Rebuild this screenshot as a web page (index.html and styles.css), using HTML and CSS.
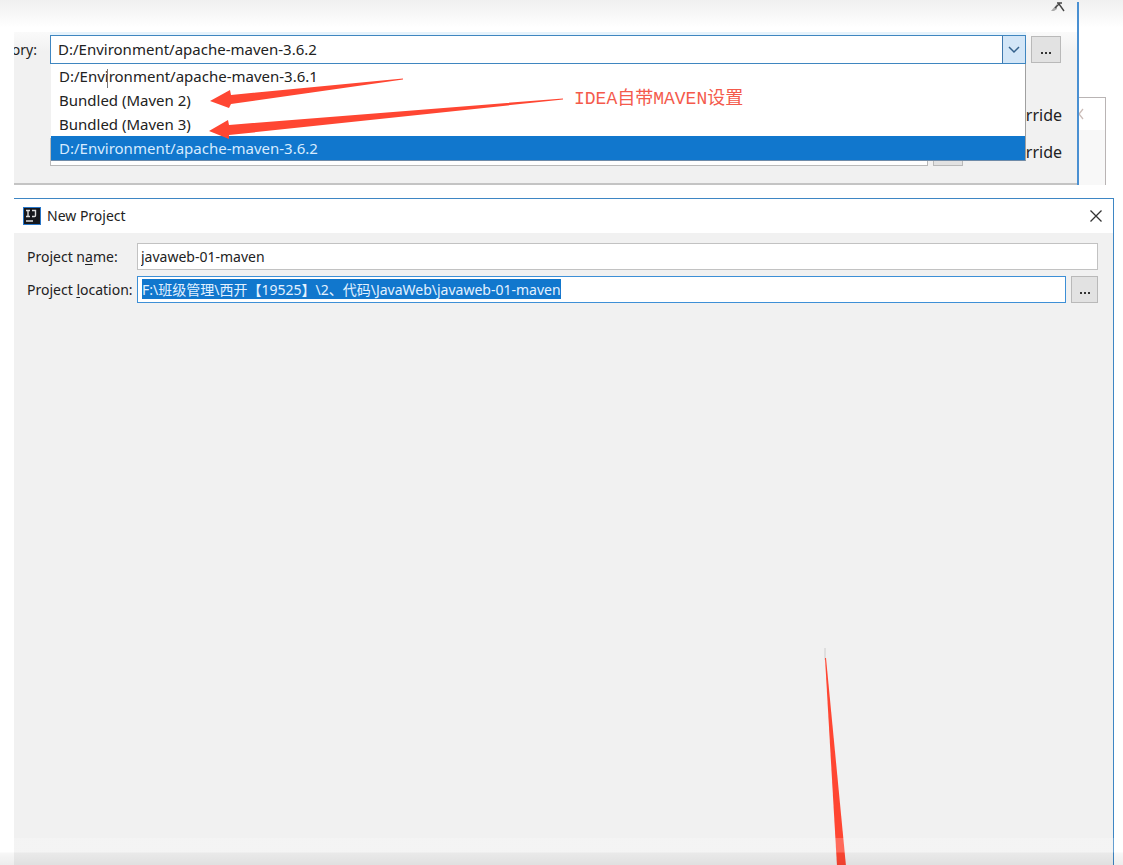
FILE: index.html
```
<!DOCTYPE html>
<html lang="zh-CN">
<head>
<meta charset="utf-8">
<meta name="viewport" content="width=device-width, initial-scale=1">
<title>New Project</title>
<link rel="stylesheet" href="styles.css">
</head>
<body>
<div class="page">
  <section class="top">
    <div class="settings">
      <div class="settings-bar">
        <svg class="bar-close" width="14" height="10" viewBox="0 0 14 10" aria-hidden="true">
          <path d="M0 9 6 2V7L3 9Z" fill="#aaa"/><path d="M4 6 8 2M6 1H11M8 2 13 9" fill="none" stroke="#444" stroke-width="1.4"/>
        </svg>
      </div>
      <div class="settings-body">
        <div class="row home-row">
          <label class="cut-label" for="home">ory:</label>
          <div class="combo">
            <input class="combo-input" id="home" type="text" value="D:/Environment/apache-maven-3.6.2">
            <button class="combo-arrow" type="button" aria-label="Show list">
              <svg width="12" height="8" viewBox="0 0 12 8"><path d="M1 1 6 6 11 1" fill="none" stroke="#35618c" stroke-width="1.5"/></svg>
            </button>
            <div class="list" role="listbox" aria-label="Maven home">
              <button class="option" type="button" role="option">D:/Environment/apache-maven-3.6.1</button>
              <button class="option" type="button" role="option">Bundled (Maven 2)</button>
              <button class="option" type="button" role="option">Bundled (Maven 3)</button>
              <button class="option chosen" type="button" role="option" aria-selected="true">D:/Environment/apache-maven-3.6.2</button>
            </div>
          </div>
          <button class="browse big" type="button" aria-label="Browse home"><span class="dots"></span></button>
        </div>
        <div class="row override-row"><span class="override">rride</span></div>
        <div class="row override-row">
          <input class="repo" type="text" aria-label="Local repository">
          <button class="browse big" type="button" aria-label="Browse repository"></button>
          <span class="override">rride</span>
        </div>
      </div>
      <svg class="arrows" width="600" height="150" viewBox="0 0 600 150" aria-hidden="true">
        <path d="M107.500 69V88" stroke="#777"/>
        <path d="M210 101 230 90 231 95 403 78.500V79.500L231 104 229 108Z" fill="#ff4632"/>
        <path d="M209 131 228 120 229 125 563 98.500V99.500L229 135V139Z" fill="#ff4632"/>
      </svg>
      <p class="note">IDEA自带MAVEN设置</p>
    </div>
    <div class="ghost">
      <div class="ghost-bar"><svg width="5" height="12" viewBox="0 0 5 12" aria-hidden="true"><path d="M4 1 0 6 4 11" fill="none" stroke="#cbbcb8" stroke-width="1.3"/></svg></div>
    </div>
  </section>

  <main class="project">
    <header class="title-bar">
      <svg width="18" height="18" viewBox="0 0 18 18" aria-hidden="true">
        <rect width="18" height="18" fill="#2876c8"/><rect x="1" y="1" width="16" height="16" fill="#15171c"/>
        <path d="M3 3.500H7M5 3.500V9.500M3 9.500H7M9 3.500H12.500V8.500Q12.500 9.500 11.500 9.500H9" fill="none" stroke="#ddd" stroke-width="1.400"/>
        <path d="M3 14H10" stroke="#ddd" stroke-width="1.500"/>
      </svg>
      <h1 class="title">New Project</h1>
      <button class="close" type="button" aria-label="Close">
        <svg width="14" height="14" viewBox="0 0 14 14"><path d="M1.500 1.500 12.500 12.500M12.500 1.500 1.500 12.500" fill="none" stroke="#333" stroke-width="1.300"/></svg>
      </button>
    </header>
    <form class="form">
      <div class="form-row">
        <label class="form-label" for="name">Project n<u>a</u>me:</label>
        <input class="field" id="name" type="text" value="javaweb-01-maven">
      </div>
      <div class="form-row">
        <label class="form-label" for="location">Project <u>l</u>ocation:</label>
        <input class="field active" id="location" type="text" value="F:\班级管理\西开【19525】\2、代码\JavaWeb\javaweb-01-maven">
        <button class="browse" type="button" aria-label="Browse location"><span class="dots"></span></button>
      </div>
    </form>
    <svg class="pointer" width="30" height="220" viewBox="0 0 30 220" aria-hidden="true">
      <path d="M5 2V14" stroke="#ccc"/>
      <path d="M5 12 6 12 26 220H17Z" fill="#ff4632"/>
    </svg>
  </main>
  <div class="shade"></div>
</div>
<script src="main.js"></script>
</body>
</html>
```
FILE: styles.css
```
* { box-sizing: border-box; }
body {
  margin: 0;
  background: #fff;
  color: #222;
  font: 14px/20px "Noto Sans", "Noto Sans CJK SC", sans-serif;
}
input, button { font: inherit; color: inherit; margin: 0; border-radius: 0; outline: 0; }
.page {
  position: relative;
  display: flex;
  flex-direction: column;
  height: 100vh;
  overflow: hidden;
  background: linear-gradient(#f0f0f0, #fff 28px);
}

/* settings panel with the open drop-down */
.top { display: flex; align-items: flex-end; margin: 0 17px 0 14px; padding-top: 2px; }
.settings { position: relative; flex: 1; border-right: 2px solid #4a90d2; }
.settings-bar { height: 30px; padding-right: 12px; text-align: right; line-height: 0; }
.settings-body {
  padding: 3px 15px 17px 0;
  border-bottom: 2px solid #c4c4c4;
  background: linear-gradient(#fafafa, #f1f1f1 20px);
}
.row { display: flex; align-items: center; gap: 5px; }
.home-row { margin-bottom: 37px; }
.cut-label {
  display: flex;
  justify-content: flex-end;
  width: 23px;
  margin-right: 8px;
  overflow: hidden;
}
.combo {
  position: relative;
  display: flex;
  flex: 1;
  height: 29px;
  border: 1px solid #3f86c0;
  background: #fff;
  box-shadow: 0 -3px 0 #e6f3fc;
}
.combo-input { flex: 1; min-width: 0; padding: 0 7px 2px; border: 0; background: none; font-size: 15px; }
.combo-arrow {
  display: grid;
  place-items: center;
  width: 23px;
  padding: 0;
  border: 0;
  border-left: 1px solid #3f78ad;
  background: #d3e6f7;
}
.list {
  position: absolute;
  z-index: 1;
  top: calc(100% + 1px);
  left: 0;
  right: -1px;
  border-right: 1px solid #a0a0a0;
  border-bottom: 1px solid #6f8ba8;
  background: #fff;
}
.option {
  display: block;
  width: 100%;
  height: 24px;
  padding: 0 8px;
  border: 0;
  background: none;
  font-size: 15px;
  line-height: 24px;
  text-align: left;
}
.option.chosen { background: #1177cd; color: #d6ebff; }
.browse {
  display: grid;
  place-items: center;
  width: 27px;
  height: 27px;
  padding: 6px 0 0;
  border: 1px solid #b9b9b9;
  background: #e2e2e2;
}
.browse.big { width: 30px; }
.dots { width: 10px; height: 2px; background: repeating-linear-gradient(90deg, #333 0 2px, transparent 2px 4px); }
.override-row { height: 28px; margin-left: 36px; }
.override-row + .override-row { margin-top: 9px; }
.override { margin-left: auto; font-size: 16px; }
.home-row .browse { margin-right: 1px; }
.repo { flex: 0 0 86.8%; height: 28px; border: 1px solid #b9b9b9; background: #fff; }
.arrows { position: absolute; z-index: 2; top: -2px; left: -14px; pointer-events: none; }
.note {
  position: absolute;
  z-index: 2;
  top: 85px;
  left: 560px;
  margin: 0;
  color: #f45a4c;
  font: 18px/24px "Liberation Mono", "Noto Sans CJK SC", monospace;
}
.ghost { width: 27px; height: 88px; border: solid #b9b4b4; border-width: 1px 1px 0 0; background: #f8f8f8; }
.ghost-bar { display: flex; align-items: center; height: 32px; background: #fff; }

/* new project window */
.project {
  position: relative;
  flex: 1;
  margin: 13px 9px 0 14px;
  border: solid #3e86c4;
  border-width: 1px 1px 0 0;
  background: #f1f1f1;
}
.title-bar { display: flex; align-items: center; gap: 6px; height: 34px; padding: 0 10px 0 9px; background: #fff; }
.title { margin: 0; font-size: 14px; font-weight: 400; }
.close { display: grid; margin-left: auto; padding: 0; border: 0; background: none; }
.form { display: grid; gap: 6px; padding: 10px 15px 0 13px; }
.form-row { display: flex; align-items: center; }
.form-label { width: 110px; white-space: nowrap; }
.form-label u { text-underline-offset: 2px; }
.field { flex: 1; min-width: 0; height: 27px; padding: 0 3px; border: 1px solid #c2c2c2; background: #fff; }
.field.active,
.field.active:focus {
  padding: 0 4px 2px;
  border-color: #3d8fd6;
  outline: 1px solid #3d8fd6;
  outline-offset: -1px;
  caret-color: transparent;
}
.field::selection { background: #1177cd; color: #e2f1ff; }
.form .browse { margin-left: 5px; }
.pointer { position: absolute; top: 447px; left: 806px; }
.shade {
  position: absolute;
  right: 0;
  bottom: 0;
  left: 0;
  height: 27px;
  background: linear-gradient(rgba(255,255,255,.2) 0 14px, rgba(0,0,0,.03) 15px, rgba(0,0,0,.07));
  pointer-events: none;
}
```
FILE: main.js
```
const locationField = document.getElementById("location");
locationField.focus();
locationField.select();
```
